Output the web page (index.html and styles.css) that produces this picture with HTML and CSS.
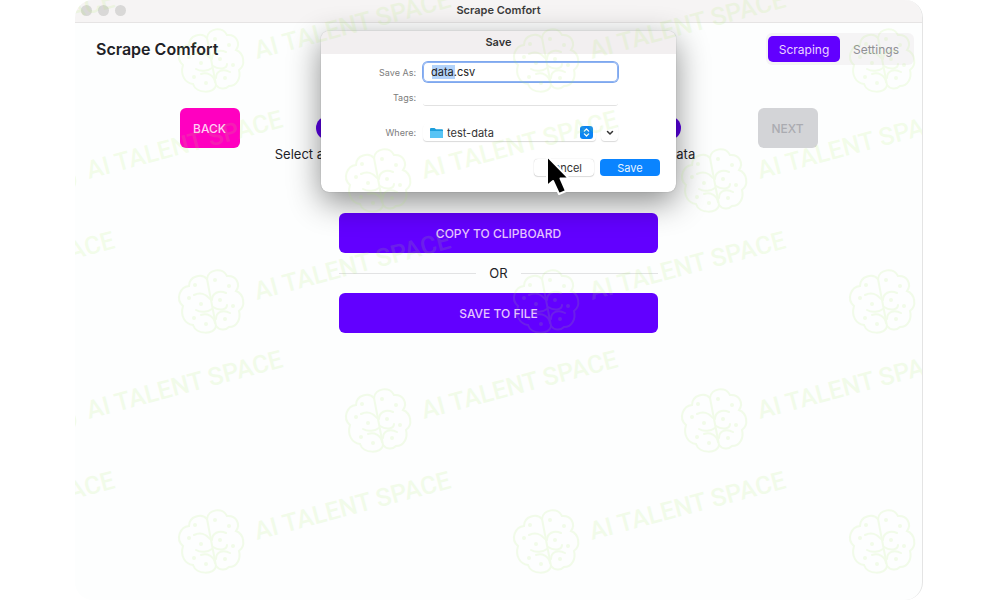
FILE: index.html
```
<!DOCTYPE html>
<html lang="en">
<head>
    <meta charset="UTF-8">
    <meta name="viewport" content="width=device-width, initial-scale=1.0">
    <title>Scrape Comfort</title>
    <link rel="stylesheet" href="styles.css">
</head>
<body>
<div class="window">
    <div class="titlebar">
        <div class="lights"><span></span><span></span><span></span></div>
        <div class="titlebar-text">Scrape Comfort</div>
    </div>

    <header class="header">
        <h1>Scrape Comfort</h1>
        <nav class="tabs">
            <button class="tab active">Scraping</button>
            <button class="tab">Settings</button>
        </nav>
    </header>

    <main>
        <div class="wizard">
            <button class="btn btn-back">BACK</button>
            <ol class="steps">
                <li>Select a template</li>
                <li>Scrape</li>
                <li>Get data</li>
            </ol>
            <button class="btn btn-next" disabled>NEXT</button>
        </div>
        <div class="export">
            <button class="btn btn-primary">COPY TO CLIPBOARD</button>
            <div class="divider">OR</div>
            <button class="btn btn-primary">SAVE TO FILE</button>
        </div>
    </main>

    <div class="overlay">
        <form class="dialog">
            <h2>Save</h2>
            <div class="fields">
                <label for="filename">Save As:</label>
                <input id="filename" class="filename" type="text" value="data.csv">

                <label for="tags">Tags:</label>
                <input id="tags" class="tags" type="text">
            </div>
            <div class="fields fields-where">
                <label for="where">Where:</label>
                <div class="where">
                    <div class="select-wrap">
                        <svg class="folder" width="13" height="12" viewBox="0 0 13 12">
                            <path d="M0 2 Q0 1 1 1 H4.5 L6 2.2 H12 Q13 2.2 13 3.2 V10 Q13 11 12 11 H1 Q0 11 0 10Z" fill="#1d9fdc"/>
                            <path d="M0 4 H13 V10 Q13 11 12 11 H1 Q0 11 0 10Z" fill="#58c4f5"/>
                        </svg>
                        <select id="where"><option>test-data</option></select>
                        <svg class="updown" width="13" height="13" viewBox="0 0 13 13">
                            <rect width="13" height="13" rx="3" fill="#0a84f5"/>
                            <path d="M4.3 5.2 L6.5 3 L8.7 5.2 M4.3 7.8 L6.5 10 L8.7 7.8" fill="none" stroke="#fff" stroke-width="1.2" stroke-linecap="round" stroke-linejoin="round"/>
                        </svg>
                    </div>
                    <button type="button" class="expand" aria-label="Expand">
                        <svg width="8" height="6" viewBox="0 0 8 6"><path d="M1.5 1.5 L4 4 L6.5 1.5" fill="none" stroke="#333" stroke-width="1.5" stroke-linecap="round" stroke-linejoin="round"/></svg>
                    </button>
                </div>
            </div>
            <div class="actions">
                <button type="button" class="cancel">Cancel</button>
                <button type="button" class="save">Save</button>
            </div>
            <svg class="cursor" width="28" height="42" viewBox="0 0 28 42">
                <path d="M2 2 V32 L8 27 L14 40 L21 37 L15.500 24.500 H24Z" fill="#000" stroke="#fff" stroke-width="2" stroke-linejoin="round"/>
            </svg>
        </form>
    </div>

    <svg class="watermark" width="100%" height="100%" aria-hidden="true">
        <defs>
            <g id="brain" fill="none" stroke-width="2" stroke-linecap="round">
                <path d="M-4 -23 C-3 -33 12 -35 16 -26 C25 -27 30 -18 25 -11 C33 -8 35 4 28 9 C30 17 26 25 18 25 C14 29 8 28 5 24"/>
                <path d="M-4 -23 C-9 -29 -22 -26 -22 -16 C-31 -15 -36 -3 -28 4 C-31 14 -26 22 -18 23 C-15 33 4 33 5 24"/>
                <path d="M-4 -23 L5 24"/>
                <path d="M1 -2 C1 -9 8 -12 15 -9 M2 5 C8 9 16 8 16 3 M5 17 C5 10 12 7 19 11"/>
                <path d="M-17 -7 C-11 -10 -5 -8 -1 -3 M-15 8 C-10 11 -3 10 1 7 M-10 13 C-4 11 3 14 4 21"/>
                <circle cx="-16" cy="-17" r="1"/><circle cx="4" cy="-22" r="1"/><circle cx="18" cy="-16" r="1"/><circle cx="-22" cy="-4" r="1"/><circle cx="-10" cy="2" r="1"/>
                <circle cx="9" cy="-2" r="1"/><circle cx="22" cy="4" r="1"/><circle cx="-17" cy="16" r="1"/><circle cx="-5" cy="22" r="1"/><circle cx="14" cy="17" r="1"/>
            </g>
            <g id="mark">
                <use href="#brain"/>
                <text x="45" y="10" transform="rotate(-15)">AI TALENT SPACE</text>
            </g>
            <g id="row">
                <use href="#mark" x="-200"/>
                <use href="#mark" x="136"/>
                <use href="#mark" x="471"/>
                <use href="#mark" x="807"/>
            </g>
        </defs>
        <use href="#row" y="61"/>
        <use href="#row" x="-168" y="181"/>
        <use href="#row" y="302"/>
        <use href="#row" x="-168" y="421"/>
        <use href="#row" y="542"/>
    </svg>
</div>
</body>
</html>
```
FILE: styles.css
```
* { box-sizing: border-box; }
body {
    margin: 0;
    background: #fff;
    font-family: Inter, "Liberation Sans", sans-serif;
    color: #1f2328;
}
button, input, select { font-family: inherit; }

.window {
    position: relative;
    min-height: 100vh;
    margin: 0 77px 0 75px;
    background: #fdfefe;
    border-right: 1px solid #e4e4e4;
    border-radius: 18px;
    overflow: hidden;
}
.titlebar {
    display: grid;
    grid-template-columns: 1fr auto 1fr;
    align-items: center;
    height: 23px;
    padding: 0 6px 2px;
    background: #f6f4f4;
    border-bottom: 1px solid #e6e4e4;
}
.lights { display: flex; gap: 6px; }
.lights span { width: 11px; height: 11px; border-radius: 50%; background: #d9d8d7; }
.titlebar-text { font-size: 11px; font-weight: 600; color: #3c3c3c; }

.header {
    display: flex;
    justify-content: space-between;
    align-items: center;
    padding: 10px 8px 0 21px;
}
.header h1 { margin: 0; font-size: 16px; font-weight: 600; }
.tabs {
    display: flex;
    padding: 3px 2px;
    background: #f5f4f5;
    border-radius: 6px;
}
.tab {
    width: 72px;
    height: 26px;
    padding: 0;
    border: 0;
    border-radius: 5px;
    background: none;
    font-size: 12px;
    color: #909095;
}
.tab.active { background: #6200ff; color: #ecd5ff; }

.wizard {
    display: flex;
    justify-content: center;
    align-items: flex-start;
    gap: 3px;
    margin-top: 43px;
}
.btn {
    height: 40px;
    border: 0;
    border-radius: 6px;
    font-size: 12px;
    font-weight: 500;
}
.btn-back { width: 60px; padding: 0; background: #ff00c0; color: #ffcff4; }
.btn-next { width: 60px; padding: 0; background: #d3d4d7; color: #abacb1; }
.btn-primary { background: #6200ff; color: #e6c4ff; }

.steps {
    display: flex;
    width: 512px;
    margin: 0;
    padding: 8px 0 0;
    list-style: none;
}
.steps li {
    display: flex;
    flex: 1;
    flex-direction: column;
    align-items: center;
    gap: 6px;
    font-size: 13px;
    line-height: 16px;
}
.steps li::before {
    content: "";
    width: 24px;
    height: 24px;
    border-radius: 50%;
    background: #5a00e8;
}

.export {
    display: flex;
    flex-direction: column;
    width: 319px;
    margin: 51px auto 0;
}
.divider {
    display: flex;
    align-items: center;
    gap: 13px;
    height: 40px;
    font-size: 13px;
}
.divider::before, .divider::after { content: ""; flex: 1; height: 1px; background: #e2e3e4; }

/* save dialog */
.overlay {
    position: absolute;
    inset: 31px 0 auto;
    display: flex;
    justify-content: center;
}
.dialog {
    position: relative;
    width: 355px;
    background: #fff;
    border-radius: 8px;
    box-shadow: 0 0 1px rgba(0,0,0,.4), 0 10px 32px rgba(0,0,0,.45);
    font-size: 11px;
    color: #333;
}
.dialog h2 {
    margin: 0;
    font-size: 11px;
    line-height: 23px;
    font-weight: 600;
    text-align: center;
    background: #f2eff0;
    border-radius: 8px 8px 0 0;
}
.fields {
    display: grid;
    grid-template-columns: 95px 195px;
    column-gap: 7px;
    row-gap: 7px;
    align-items: center;
    padding-top: 8px;
}
.fields-where { padding-top: 18px; }
.fields label { text-align: right; font-size: 9px; color: #7c7c7c; }
.fields input { width: 100%; border: 0; outline: 0; font-size: 11px; color: #222; }
.filename {
    height: 20px;
    padding: 0 8px;
    border-radius: 5px;
    box-shadow: 0 0 0 1px #7fa8ee, inset 0 0 0 1px #8db2f2;
    background: linear-gradient(#b3d3fa, #b3d3fa) 9px 3px / 23px 14px no-repeat #fff;
}
.fields .tags { height: 17px; border-bottom: 1px solid #e2e2e2; border-radius: 3px; background: none; }
.where { display: flex; gap: 5px; }
.select-wrap {
    display: flex;
    flex: 1;
    align-items: center;
    gap: 4px;
    height: 17px;
    padding: 0 3px 0 7px;
    border-radius: 4px;
    box-shadow: 0 1px 1px rgba(0,0,0,.15);
}
.select-wrap select {
    flex: 1;
    appearance: none;
    padding: 0;
    border: 0;
    background: none;
    font-size: 11px;
    color: #333;
}
.expand {
    display: flex;
    align-items: center;
    justify-content: center;
    width: 17px;
    height: 17px;
    padding: 0;
    border: 0;
    border-radius: 4px;
    background: #fff;
    box-shadow: 0 1px 1px rgba(0,0,0,.15);
}
.actions {
    display: flex;
    justify-content: flex-end;
    gap: 6px;
    padding: 18px 16px 16px;
}
.actions button {
    width: 60px;
    height: 17px;
    padding: 0;
    border: 0;
    border-radius: 4px;
    font-size: 11px;
}
.actions .cancel { background: #fff; color: #333; box-shadow: 0 0 1px rgba(0,0,0,.25), 0 1px 1px rgba(0,0,0,.12); }
.actions .save { background: #0a84ff; color: #e8f4ff; }
.cursor { position: absolute; left: 224px; top: 123px; }

.watermark {
    position: absolute;
    inset: 0;
    pointer-events: none;
    opacity: .13;
    stroke: #a8ea60;
    fill: #a8ea60;
}
.watermark text {
    font-family: Roboto, "Liberation Sans", sans-serif;
    font-size: 25px;
    font-weight: 500;
    stroke: none;
}
```
